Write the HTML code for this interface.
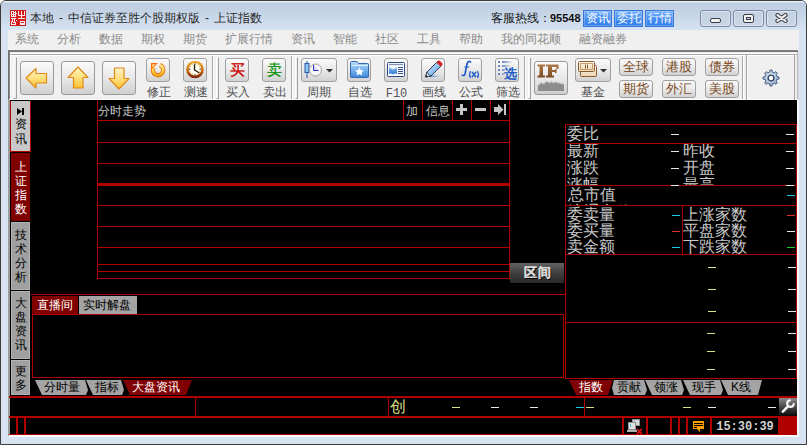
<!DOCTYPE html>
<html><head><meta charset="utf-8">
<style>
*{box-sizing:border-box}
html,body{margin:0;padding:0;width:807px;height:445px;overflow:hidden;background:#fff}
body{font-family:"Liberation Sans",sans-serif;font-size:12px;position:relative}
.a{position:absolute}
#win{left:0;top:0;width:807px;height:445px;border:1px solid #4a4a4a;border-radius:6px 6px 0 0;background:#d7e3f1;border-color:#3c3c3c;overflow:hidden}
#titlebar{left:0;top:0;width:805px;height:30px;background:linear-gradient(#e6eef7 0,#e6eef7 1px,#bccde0 2px,#c8d7e8 50%,#d6e4f2)}
.hy{display:inline-block;width:14px;text-align:center}
.cap{color:#2b2b2b;font-size:12px;line-height:14px;white-space:nowrap}
.bbtn{top:10px;height:17px;width:29px;background:linear-gradient(#74b0fa,#4a92f2 45%,#2f7ceb);border:1px solid #3a78d8;box-shadow:inset 0 0 0 1px rgba(255,255,255,.25);color:#fff;font-size:12px;line-height:15px;text-align:center;white-space:nowrap}
.wbtn{top:10px;height:17px;width:31px;border:1px solid #7a88a6;border-radius:3px;background:linear-gradient(#c2d0e0,#c8d6e6);box-shadow:inset 0 0 0 1px #dde6f0}
#menubar{left:8px;top:30px;width:791px;height:20px;background:#f0f0f0}
.mi{top:2px;color:#8a8a8a;font-size:12px;line-height:14px;white-space:nowrap}
#toolbar{left:7px;top:49px;width:791px;height:51px;background:#f0f0f0;border-top:2px solid #6e6e6e;border-left:2px solid #7a7a7a}
.bigbtn{width:34px;height:34px;border:1px solid #9a9a9a;border-radius:3px;background:linear-gradient(#fafafa,#e6e6e6 55%,#cfcfcf)}
.smbtn{width:24px;height:24px;border:1px solid #a0a0a0;border-radius:3px;background:linear-gradient(#fafafa,#e8e8e8 55%,#d2d2d2)}
.lbl{top:85px;color:#4c4c4c;font-size:12px;line-height:14px;white-space:nowrap;text-align:center}
.sep{top:56px;width:2px;height:43px;border-left:1px solid #a8a8a8;border-right:1px solid #fff}
.grip{top:57px;width:3px;height:42px;border-left:1px solid #fff;border-right:1px solid #a0a0a0;border-top:1px solid #fff;border-bottom:1px solid #a0a0a0}
.tbtn{width:34px;height:18px;border:1px solid #a0a0a0;border-radius:3px;background:linear-gradient(#fafafa,#e8e8e8 55%,#d2d2d2);color:#7a4a22;font-size:13px;line-height:16px;text-align:center;white-space:nowrap}
#main{left:10px;top:100px;width:787px;height:335px;background:#000;overflow:hidden}
.r{background:#b00000}
.vt{width:21px;color:#000;font-size:12px;line-height:14px;text-align:center;border-left:1px solid #b00000;border-right:1px solid #b00000}
.w{color:#c8c8c8}
.dash{height:1px;width:8px}
</style></head><body>
<div id="win" class="a">
  <div id="titlebar" class="a"></div>
</div>
<!-- logo -->
<svg class="a" style="left:10px;top:10px" width="16" height="16"><rect width="16" height="16" fill="#d41c1c"/><g fill="#fff" opacity=".92"><rect x="11" y="1" width="1" height="7"/><rect x="8" y="1" width="1" height="5"/><rect x="14" y="1" width="1" height="5"/><rect x="8" y="5" width="7" height="1"/><rect x="8" y="8" width="7" height="1"/><rect x="10" y="11" width="1" height="4"/><rect x="14" y="11" width="1" height="4"/><rect x="10" y="11" width="5" height="1"/><rect x="10" y="13" width="5" height="2"/><rect x="1" y="1" width="2" height="1"/><rect x="1" y="2" width="1" height="4"/><rect x="3" y="1" width="1" height="3"/><rect x="4" y="2" width="2" height="1"/><rect x="5" y="1" width="1" height="5"/><rect x="2" y="4" width="3" height="1"/><rect x="1" y="6" width="5" height="1"/><rect x="3" y="5" width="1" height="1"/><rect x="6" y="3" width="1" height="1"/><rect x="1" y="8" width="3" height="1"/><rect x="4" y="8" width="2" height="1"/><rect x="2" y="9" width="1" height="2"/><rect x="4" y="9" width="1" height="3"/><rect x="1" y="11" width="2" height="1"/><rect x="1" y="12" width="1" height="3"/><rect x="3" y="12" width="3" height="1"/><rect x="2" y="14" width="3" height="1"/><rect x="5" y="13" width="1" height="2"/><rect x="6" y="10" width="1" height="1"/></g></svg>
<div class="a cap" style="left:30px;top:11px">本地<span class="hy">-</span>中信证券至胜个股期权版<span class="hy">-</span>上证指数</div>
<div class="a cap" style="left:491px;top:11px;color:#111">客服热线：</div><div class="a cap" style="left:550px;top:11px;color:#111;font-size:11px;font-weight:bold;letter-spacing:0px">95548</div>
<div class="a bbtn" style="left:583px">资讯</div>
<div class="a bbtn" style="left:614px">委托</div>
<div class="a bbtn" style="left:645px">行情</div>
<div class="a wbtn" style="left:700px"></div>
<div class="a wbtn" style="left:733px"></div>
<div class="a wbtn" style="left:766px"></div>
<div class="a" style="left:710px;top:18px;width:11px;height:5px;border:1px solid #3a3a48;border-radius:2px;background:#f4f2ee"></div>
<div class="a" style="left:743px;top:14px;width:11px;height:9px;border:1px solid #3a3a48;border-radius:2px;background:#f4f2ee"></div>
<div class="a" style="left:746px;top:17px;width:5px;height:3px;border:1px solid #3a3a48;background:#c8d4e4"></div>
<svg class="a" style="left:775px;top:13px" width="13" height="10"><path d="M2.5 2.2 L10.5 7.8 M10.5 2.2 L2.5 7.8" stroke="#3a3a48" stroke-width="4.2" stroke-linecap="round"/><path d="M2.5 2.2 L10.5 7.8 M10.5 2.2 L2.5 7.8" stroke="#f4f2ee" stroke-width="2.2" stroke-linecap="round"/></svg>

<div id="menubar" class="a">
  <div class="a mi" style="left:7px">系统</div>
  <div class="a mi" style="left:49px">分析</div>
  <div class="a mi" style="left:91px">数据</div>
  <div class="a mi" style="left:133px">期权</div>
  <div class="a mi" style="left:175px">期货</div>
  <div class="a mi" style="left:217px">扩展行情</div>
  <div class="a mi" style="left:283px">资讯</div>
  <div class="a mi" style="left:325px">智能</div>
  <div class="a mi" style="left:367px">社区</div>
  <div class="a mi" style="left:409px">工具</div>
  <div class="a mi" style="left:451px">帮助</div>
  <div class="a mi" style="left:493px">我的同花顺</div>
  <div class="a mi" style="left:571px">融资融券</div>
</div>


<div class="a" style="left:8px;top:50px;width:791px;height:50px;background:#f0f0f0"></div>
<div class="a" style="left:797px;top:52px;width:1px;height:48px;background:#b8b8b8"></div><div class="a" style="left:798px;top:52px;width:1px;height:48px;background:#dcdcdc"></div>
<div class="a" style="left:8px;top:50px;width:790px;height:2px;background:linear-gradient(#8a8a8a,#6a6a6a)"></div>
<div class="a" style="left:8px;top:50px;width:2px;height:50px;background:linear-gradient(90deg,#6a6a6a,#8a8a8a)"></div>
<div class="a" style="left:10px;top:53px;width:787px;height:1px;background:#fff"></div>
<div class="a" style="left:10px;top:54px;width:787px;height:1px;background:#a8a8a8"></div>
<div class="a" style="left:10px;top:55px;width:787px;height:1px;background:#fff"></div>
<div class="a" style="left:10px;top:55px;width:1px;height:45px;background:#fff"></div>
<div class="a" style="left:9px;top:99px;width:789px;height:1px;background:#fafafa"></div>
<!-- grips & seps -->
<div class="a grip" style="left:13px;width:4px"></div>
<div class="a sep" style="left:212px"></div><div class="a grip" style="left:216px"></div>
<div class="a sep" style="left:291px"></div><div class="a grip" style="left:295px"></div>
<div class="a sep" style="left:524px"></div><div class="a grip" style="left:528px"></div>
<div class="a sep" style="left:742px"></div>
<div class="a" style="left:746px;top:55px;width:49px;height:45px;border-left:1px solid #a0a0a0;border-right:1px solid #a0a0a0;box-shadow:inset 1px 0 0 #fff"></div>

<!-- big arrow buttons -->
<div class="a bigbtn" style="left:20px;top:61px"></div>
<div class="a bigbtn" style="left:61px;top:61px"></div>
<div class="a bigbtn" style="left:102px;top:61px"></div>
<svg class="a" style="left:20px;top:61px" width="34" height="34">
<defs><linearGradient id="ag" x1="0" y1="0" x2="0" y2="1"><stop offset="0" stop-color="#fff4c8"/><stop offset="0.5" stop-color="#ffe080"/><stop offset="1" stop-color="#ffc030"/></linearGradient></defs>
<path d="M6 17 L16 7.5 V12.5 H26.5 V22 H16 V27 Z" fill="url(#ag)" stroke="#e08a18" stroke-width="1.2" stroke-linejoin="round"/>
</svg>
<svg class="a" style="left:61px;top:61px" width="34" height="34">
<path d="M17 6 L27 16.5 H22 V27 H12.5 V16.5 H7 Z" fill="url(#ag)" stroke="#e08a18" stroke-width="1.2" stroke-linejoin="round"/>
</svg>
<svg class="a" style="left:102px;top:61px" width="34" height="34">
<path d="M17 28 L27 17.5 H22 V7 H12.5 V17.5 H7 Z" fill="url(#ag)" stroke="#e08a18" stroke-width="1.2" stroke-linejoin="round"/>
</svg>

<!-- small buttons -->
<div class="a smbtn" style="left:146px;top:58px"></div>
<div class="a smbtn" style="left:183px;top:58px"></div>
<div class="a smbtn" style="left:225px;top:58px"></div>
<div class="a smbtn" style="left:262px;top:58px"></div>
<div class="a smbtn" style="left:301px;top:58px;width:36px"></div>
<div class="a smbtn" style="left:347px;top:58px"></div>
<div class="a smbtn" style="left:384px;top:58px"></div>
<div class="a smbtn" style="left:421px;top:58px"></div>
<div class="a smbtn" style="left:458px;top:58px"></div>
<div class="a smbtn" style="left:495px;top:58px"></div>
<div class="a bigbtn" style="left:534px;top:61px"></div>
<div class="a smbtn" style="left:575px;top:58px;width:36px"></div>

<!-- icons -->
<svg class="a" style="left:146px;top:58px" width="24" height="24">
<defs><linearGradient id="og" x1="0" y1="0" x2="0" y2="1"><stop offset="0" stop-color="#fff0a0"/><stop offset=".6" stop-color="#ffd040"/><stop offset="1" stop-color="#f0a818"/></linearGradient></defs>
<path d="M13.8 7.1 A5.2 5.2 0 1 1 7.5 9.4" fill="none" stroke="#e87818" stroke-width="4.4"/>
<path d="M13.8 7.1 A5.2 5.2 0 1 1 7.5 9.4" fill="none" stroke="url(#og)" stroke-width="2.6"/>
<path d="M5 5 H12 L5 12 Z" fill="#ff6a10"/>
<path d="M6.3 6.3 H9.5 L6.3 9.5 Z" fill="#ffe890"/>
</svg>
<svg class="a" style="left:183px;top:58px" width="24" height="24">
<defs><linearGradient id="cg" x1="0" y1="0" x2="0" y2="1"><stop offset="0" stop-color="#f0b030"/><stop offset=".55" stop-color="#c87010"/><stop offset="1" stop-color="#7a1a06"/></linearGradient></defs>
<circle cx="12" cy="11.5" r="8.8" fill="url(#cg)"/>
<circle cx="12" cy="11.3" r="6.2" fill="#fffcf0"/>
<path d="M11.5 6.5 V12 L16.5 15" stroke="#201008" stroke-width="1.3" fill="none"/>
<g fill="#302010"><circle cx="12" cy="6" r=".7"/><circle cx="17.2" cy="11.3" r=".7"/><circle cx="12" cy="16.6" r=".7"/><circle cx="6.6" cy="11.3" r=".7"/></g>
<g fill="#e0a040"><circle cx="14.7" cy="6.8" r=".5"/><circle cx="9.3" cy="6.8" r=".5"/><circle cx="16.5" cy="8.7" r=".5"/><circle cx="7.5" cy="8.7" r=".5"/><circle cx="16.5" cy="14" r=".5"/><circle cx="7.5" cy="14" r=".5"/><circle cx="14.7" cy="15.9" r=".5"/><circle cx="9.3" cy="15.9" r=".5"/></g>
</svg>
<div class="a" style="left:225px;top:60px;width:24px;text-align:center;font-size:15px;line-height:20px;color:#cc0000;font-weight:normal;-webkit-text-stroke:.3px #cc0000">买</div>
<div class="a" style="left:262px;top:60px;width:24px;text-align:center;font-size:15px;line-height:20px;color:#0a900a;font-weight:normal;-webkit-text-stroke:.3px #0a900a">卖</div>
<svg class="a" style="left:301px;top:58px" width="36" height="24">
<path d="M6 3 V20" stroke="#2a5aa0" stroke-width="1"/>
<rect x="4" y="5.5" width="4" height="9" fill="#8cc4f4" stroke="#2a5aa0" stroke-width="1"/>
<circle cx="14.5" cy="12" r="6" fill="#f8f8f8" stroke="#a0a0a0" stroke-width="1"/>
<path d="M12.5 7 V12.5 H17.5 Z" fill="#d0d8f8"/>
<path d="M12.5 7 V12.5 H17.5" stroke="#3030b0" stroke-width="1" fill="none"/>
<path d="M25 11 H32 L28.5 14.5 Z" fill="#303030"/>
</svg>
<svg class="a" style="left:347px;top:58px" width="24" height="24">
<defs><linearGradient id="fg" x1="0" y1="0" x2="0" y2="1"><stop offset="0" stop-color="#b8dcfa"/><stop offset=".5" stop-color="#7ab4ee"/><stop offset="1" stop-color="#3c84dc"/></linearGradient></defs>
<path d="M3.5 4.5 Q3.5 3.5 4.5 3.5 H10 L11.5 5.5 H20.5 Q21.5 5.5 21.5 6.5 V18.5 Q21.5 19.5 20.5 19.5 H4.5 Q3.5 19.5 3.5 18.5 Z" fill="url(#fg)" stroke="#3468b0" stroke-width="1"/>
<path d="M4 7.5 H21" stroke="#e0f0ff" stroke-width="1"/>
<path d="M12.5 9.5 L13.9 12.3 L17 12.6 L14.7 14.6 L15.4 17.6 L12.5 16 L9.6 17.6 L10.3 14.6 L8 12.6 L11.1 12.3 Z" fill="#fff"/>
</svg>
<svg class="a" style="left:384px;top:58px" width="24" height="24">
<defs><linearGradient id="wv" x1="0" y1="0" x2="0" y2="1"><stop offset="0" stop-color="#90c0f0"/><stop offset="1" stop-color="#2a78d8"/></linearGradient></defs>
<rect x="3.5" y="4.5" width="17" height="14" rx="1" fill="#fafcff" stroke="#2a4a80" stroke-width="1"/>
<path d="M5 6.5 H19" stroke="#8090b0" stroke-width="1.2"/>
<path d="M5 9 L9 11.5 L13 9 V16 Q11 15 9 16.5 Q7 15 5 16 Z" fill="url(#wv)"/>
<path d="M14 9.5 H19 M14 11.5 H19 M14 13.5 H19 M14 15.5 H19" stroke="#34508a" stroke-width="1"/>
</svg>
<svg class="a" style="left:421px;top:58px" width="24" height="24">
<defs><linearGradient id="sh" x1="0" y1="0" x2="1" y2="0"><stop offset="0" stop-color="#2a80e0"/><stop offset="1" stop-color="#2a80e0" stop-opacity="0"/></linearGradient>
<linearGradient id="pb" x1="0" y1="0" x2="1" y2="1"><stop offset="0" stop-color="#d8ecff"/><stop offset=".5" stop-color="#98c4f0"/><stop offset="1" stop-color="#5a90d0"/></linearGradient></defs>
<rect x="8" y="17.5" width="11" height="1.6" fill="url(#sh)"/>
<path d="M4.5 19 L6 14 L16.5 3.5 L20.5 7.5 L10 18 Z" fill="url(#pb)" stroke="#2a3a58" stroke-width="1" stroke-linejoin="round"/>
<path d="M15.5 4.5 L17.3 2.7 Q18 2 18.7 2.7 L21.3 5.3 Q22 6 21.3 6.7 L19.5 8.5 Z" fill="#d82020"/>
<path d="M6 14 Q7 17 10 18 L4.5 19 Z" fill="#f0f0f0" stroke="#2a3a58" stroke-width=".8"/>
<path d="M4.5 19 L5.2 16.8 L6.8 18.3 Z" fill="#101010"/>
</svg>
<svg class="a" style="left:458px;top:58px" width="24" height="24">
<g fill="none" stroke="#1e5cc8" stroke-linecap="round">
<path d="M12.5 4 Q11.5 2.8 10.3 3.6 Q9.3 4.4 8.9 6.5 L7 16 Q6.4 18.2 4.3 17.2" stroke-width="1.7"/>
<path d="M6.8 9 H10.8" stroke-width="1.2"/>
<path d="M12.3 13.5 Q10.8 16.5 12.3 19.5 M19.7 13.5 Q21.2 16.5 19.7 19.5" stroke-width="1.3"/>
<path d="M14.2 14.2 L17.8 18.8 M17.8 14.2 L14.2 18.8" stroke-width="1.4"/>
</g></svg>
<svg class="a" style="left:495px;top:58px" width="24" height="24">
<defs><linearGradient id="fb" x1="0" y1="0" x2="1" y2="0"><stop offset="0" stop-color="#6a8cc0"/><stop offset="1" stop-color="#6a8cc0" stop-opacity="0"/></linearGradient></defs>
<g fill="#6a88b8"><rect x="3" y="3" width="2" height="2"/><rect x="3" y="7" width="2" height="2"/><rect x="3" y="11" width="2" height="2"/><rect x="3" y="15" width="2" height="2"/></g>
<g fill="url(#fb)"><rect x="7" y="3" width="11" height="2"/><rect x="7" y="7" width="9" height="2"/><rect x="7" y="11" width="5" height="2"/><rect x="7" y="15" width="3" height="2"/></g>
<text x="9" y="20" font-size="13" font-weight="bold" fill="#1e5cc8" font-family="Liberation Sans, sans-serif">选</text>
</svg>
<svg class="a" style="left:534px;top:61px" width="34" height="34">
<defs><linearGradient id="ifg" x1="0" y1="0" x2="0" y2="1"><stop offset="0" stop-color="#b07848"/><stop offset="1" stop-color="#7a4a20"/></linearGradient></defs>
<g fill="url(#ifg)">
<path d="M3.5 3.5 H11 V5.5 H9 V14.5 H11 V16.5 H3.5 V14.5 H5.5 V5.5 H3.5 Z"/>
<path d="M12 3.5 H24.5 V8 H22.5 V6 H18 V9 H21 V8 H22.5 V12 H21 V11 H18 V14.5 H20 V16.5 H12 V14.5 H14 V5.5 H12 Z"/>
</g>
<path d="M4 30 V25 L5 23 L6 24 L7 21 L8 23 L9 22 L10 24 L11 21 L12 22 L13 20 L14 22 L15 21 L16 23 L17 20 L18 22 L19 21 L20 23 L21 20 L22 22 L23 21 L24 23 L25 21 L26 23 L27 22 L28 24 L29 22 L30 24 V30 Z" fill="#8c8c8c"/>
</svg>
<svg class="a" style="left:575px;top:58px" width="36" height="24">
<defs><linearGradient id="bg1" x1="0" y1="0" x2="0" y2="1"><stop offset="0" stop-color="#fffaf0"/><stop offset="1" stop-color="#e8d4b0"/></linearGradient></defs>
<rect x="5.5" y="7.5" width="16" height="11" rx="1" fill="url(#bg1)" stroke="#8a5a30" stroke-width="1"/>
<rect x="3.5" y="3.5" width="16" height="10" rx="1" fill="url(#bg1)" stroke="#8a5a30" stroke-width="1"/>
<rect x="5.5" y="5.5" width="12" height="6" fill="none" stroke="#c8a070" stroke-width="1"/>
<path d="M10.5 6.5 V10.5 M12.5 6.5 V10.5" stroke="#8a6030" stroke-width="1"/>
<path d="M25 11 H32 L28.5 14.5 Z" fill="#303030"/>
</svg>
<!-- gear -->
<svg class="a" style="left:762px;top:69px" width="18" height="18">
<defs><radialGradient id="gg" cx=".45" cy=".4" r=".65"><stop offset="0" stop-color="#e4ecf4"/><stop offset=".7" stop-color="#a8bcd4"/><stop offset="1" stop-color="#6a84a8"/></radialGradient></defs>
<path d="M7.60 3.17 L7.94 1.07 L10.06 1.07 L10.40 3.17 L12.13 3.88 L13.85 2.64 L15.36 4.15 L14.12 5.87 L14.83 7.60 L16.93 7.94 L16.93 10.06 L14.83 10.40 L14.12 12.13 L15.36 13.85 L13.85 15.36 L12.13 14.12 L10.40 14.83 L10.06 16.93 L7.94 16.93 L7.60 14.83 L5.87 14.12 L4.15 15.36 L2.64 13.85 L3.88 12.13 L3.17 10.40 L1.07 10.06 L1.07 7.94 L3.17 7.60 L3.88 5.87 L2.64 4.15 L4.15 2.64 L5.87 3.88 Z" fill="url(#gg)" stroke="#3a5478" stroke-width=".9" stroke-linejoin="round"/>
<circle cx="9" cy="9" r="2.9" fill="#fff" stroke="#2e4468" stroke-width="1.4"/>
</svg>

<!-- labels -->
<div class="a lbl" style="left:146px;width:25px">修正</div>
<div class="a lbl" style="left:183px;width:25px">测速</div>
<div class="a lbl" style="left:225px;width:25px">买入</div>
<div class="a lbl" style="left:262px;width:25px">卖出</div>
<div class="a lbl" style="left:301px;width:36px">周期</div>
<div class="a lbl" style="left:347px;width:25px">自选</div>
<div class="a lbl" style="left:384px;top:87px;width:25px;font-family:'Liberation Mono',monospace;color:#555">F10</div>
<div class="a lbl" style="left:421px;width:25px">画线</div>
<div class="a lbl" style="left:458px;width:25px">公式</div>
<div class="a lbl" style="left:495px;width:25px">筛选</div>
<div class="a lbl" style="left:575px;width:36px">基金</div>

<div class="a tbtn" style="left:619px;top:58px">全球</div>
<div class="a tbtn" style="left:619px;top:80px">期货</div>
<div class="a tbtn" style="left:662px;top:58px">港股</div>
<div class="a tbtn" style="left:662px;top:80px">外汇</div>
<div class="a tbtn" style="left:705px;top:58px">债券</div>
<div class="a tbtn" style="left:705px;top:80px">美股</div>



<div id="main" class="a"></div>
<!-- frame shadow line left of black -->
<div class="a" style="left:8px;top:100px;width:2px;height:336px;background:#9c9c9c"></div>
<!-- white bottom edge -->
<div class="a" style="left:9px;top:435px;width:790px;height:2px;background:#fafafa"></div>
<div class="a" style="left:797px;top:100px;width:2px;height:337px;background:#fafafa"></div>

<!-- left vertical tabs -->
<div class="a" style="left:10px;top:101px;width:21px;height:51px;background:#c8c8c8;border:1px solid #b00000;border-top:0"></div>
<svg class="a" style="left:17px;top:108px" width="8" height="7"><path d="M0 0 L5 3.5 L0 7 Z M5 0 H7 V7 H5 Z" fill="#000"/></svg>
<div class="a vt" style="left:10px;top:117px;border:0;line-height:15px">资<br>讯</div>
<div class="a" style="left:11px;top:153px;width:19px;height:68px;background:#800000"></div>
<div class="a vt" style="left:10px;top:160px;border:0;color:#fff">上<br>证<br>指<br>数</div>
<div class="a" style="left:11px;top:222px;width:19px;height:68px;background:#a0a0a0;box-shadow:inset 0 0 0 1px #b4b4b4"></div>
<div class="a vt" style="left:10px;top:228px;border:0">技<br>术<br>分<br>析</div>
<div class="a" style="left:11px;top:291px;width:19px;height:68px;background:#a0a0a0;box-shadow:inset 0 0 0 1px #b4b4b4"></div>
<div class="a vt" style="left:10px;top:296px;border:0">大<br>盘<br>资<br>讯</div>
<div class="a" style="left:11px;top:360px;width:19px;height:35px;background:#a0a0a0;box-shadow:inset 0 0 0 1px #b4b4b4"></div>
<div class="a vt" style="left:10px;top:364px;border:0">更<br>多</div>

<!-- chart area -->
<div class="a w" style="left:98px;top:104px;font-size:12px;line-height:14px;color:#c8c8c8">分时走势</div>
<div class="a r" style="left:97px;top:100px;width:1px;height:179px"></div>
<div class="a r" style="left:509px;top:100px;width:1px;height:179px"></div>
<div class="a r" style="left:97px;top:120px;width:413px;height:1px"></div>
<div class="a r" style="left:97px;top:142px;width:413px;height:1px"></div>
<div class="a r" style="left:97px;top:163px;width:413px;height:1px"></div>
<div class="a r" style="left:97px;top:183px;width:413px;height:3px"></div>
<div class="a r" style="left:97px;top:205px;width:413px;height:1px"></div>
<div class="a r" style="left:97px;top:226px;width:413px;height:1px"></div>
<div class="a r" style="left:97px;top:247px;width:413px;height:1px"></div>
<div class="a r" style="left:97px;top:264px;width:413px;height:1px"></div>
<div class="a r" style="left:97px;top:271px;width:413px;height:1px"></div>
<div class="a r" style="left:97px;top:278px;width:413px;height:1px"></div>
<!-- top buttons -->
<div class="a r" style="left:403px;top:100px;width:1px;height:20px"></div>
<div class="a r" style="left:422px;top:100px;width:1px;height:20px"></div>
<div class="a r" style="left:452px;top:100px;width:1px;height:20px"></div>
<div class="a r" style="left:471px;top:100px;width:1px;height:20px"></div>
<div class="a r" style="left:490px;top:100px;width:1px;height:20px"></div>
<div class="a w" style="left:406px;top:104px;font-size:12px;line-height:14px">加</div>
<div class="a w" style="left:426px;top:104px;font-size:12px;line-height:14px">信息</div>
<svg class="a" style="left:456px;top:104px" width="11" height="11"><path d="M4 0 H7 V4 H11 V7 H7 V11 H4 V7 H0 V4 H4 Z" fill="#c8c8c8"/></svg>
<svg class="a" style="left:475px;top:108px" width="11" height="3"><rect width="11" height="3" fill="#c8c8c8"/></svg>
<svg class="a" style="left:494px;top:104px" width="12" height="11"><path d="M0 3 H4 V0 L9.5 5.5 L4 11 V8 H0 Z M10 0 H12 V11 H10 Z" fill="#c8c8c8"/></svg>
<!-- 区间 button -->
<div class="a" style="left:510px;top:263px;width:54px;height:20px;background:linear-gradient(#626262,#3a3a3a 60%,#2a2a2a);color:#d8d8d8;font-size:13px;line-height:20px;font-weight:bold;-webkit-text-stroke:.3px #d8d8d8;text-shadow:1px 1px 0 #000"><span style="position:absolute;left:14px">区</span><span style="position:absolute;left:28px">间</span></div>

<!-- live panel -->
<div class="a r" style="left:31px;top:294px;width:535px;height:1px"></div>
<div class="a" style="left:32px;top:296px;width:46px;height:18px;background:#800000;color:#fff;font-size:12px;line-height:18px;padding-left:5px;white-space:nowrap">直播间</div>
<div class="a" style="left:79px;top:296px;width:58px;height:18px;background:#a4a4a4;color:#000;font-size:12px;line-height:18px;padding-left:4px;white-space:nowrap">实时解盘</div>
<div class="a" style="left:32px;top:314px;width:532px;height:64px;border:1px solid #b00000"></div>
<!-- bottom tabs left -->
<svg class="a" style="left:30px;top:380px" width="170" height="15">
<polygon points="5,0 55,0 58,10 56,15 12,15" fill="#a4a4a4"/>
<polygon points="56,0 91,0 94,10 92,15 63,15" fill="#a4a4a4"/>
<polygon points="93,0 162,0 156,15 100,15" fill="#800000"/>
</svg>
<div class="a" style="left:44px;top:380px;font-size:12px;line-height:15px;color:#000;white-space:nowrap">分时量</div>
<div class="a" style="left:95px;top:380px;font-size:12px;line-height:15px;color:#000;white-space:nowrap">指标</div>
<div class="a" style="left:132px;top:380px;font-size:12px;line-height:15px;color:#fff;white-space:nowrap">大盘资讯</div>

<!-- right panel -->
<div class="a r" style="left:565px;top:124px;width:232px;height:1px"></div>
<div class="a r" style="left:565px;top:143px;width:232px;height:1px"></div>
<div class="a r" style="left:565px;top:185px;width:232px;height:1px"></div>
<div class="a r" style="left:565px;top:205px;width:232px;height:1px"></div>
<div class="a r" style="left:565px;top:254px;width:232px;height:1px"></div>
<div class="a r" style="left:565px;top:322px;width:232px;height:1px"></div>
<div class="a r" style="left:565px;top:378px;width:232px;height:1px"></div>
<div class="a r" style="left:565px;top:124px;width:1px;height:255px"></div>
<div class="a r" style="left:796px;top:124px;width:1px;height:255px"></div>
<div class="a r" style="left:682px;top:205px;width:1px;height:49px"></div>

<div class="a" style="left:566px;top:125px;width:230px;height:18px;overflow:hidden"><div class="a w" style="left:1px;top:0px;font-size:16px;line-height:17px">委比</div></div>
<div class="a" style="left:566px;top:144px;width:230px;height:41px;overflow:hidden">
 <div class="a w" style="left:1px;top:-2px;font-size:16px;line-height:17px">最新<br>涨跌<br>涨幅</div>
 <div class="a w" style="left:117px;top:-2px;font-size:16px;line-height:17px">昨收<br>开盘<br>最高</div>
</div>
<div class="a" style="left:566px;top:186px;width:230px;height:19px;overflow:hidden">
 <div class="a w" style="left:2px;top:0px;font-size:16px;line-height:17px">总市值<br>流通市值</div>
</div>
<div class="a" style="left:566px;top:206px;width:116px;height:48px;overflow:hidden">
 <div class="a w" style="left:1px;top:1px;font-size:16px;line-height:16px">委卖量<br>委买量<br>卖金额</div>
</div>
<div class="a" style="left:683px;top:206px;width:113px;height:48px;overflow:hidden">
 <div class="a w" style="left:0px;top:1px;font-size:16px;line-height:16px">上涨家数<br>平盘家数<br>下跌家数</div>
</div>
<div class="a" style="left:671px;top:134px;width:8px;height:1px;background:#e8e8e8"></div>
<div class="a" style="left:786px;top:134px;width:8px;height:1px;background:#e8e8e8"></div>
<div class="a" style="left:671px;top:151px;width:8px;height:1px;background:#e8e8e8"></div>
<div class="a" style="left:786px;top:151px;width:8px;height:1px;background:#e8e8e8"></div>
<div class="a" style="left:671px;top:168px;width:8px;height:1px;background:#e8e8e8"></div>
<div class="a" style="left:786px;top:168px;width:8px;height:1px;background:#e8e8e8"></div>
<div class="a" style="left:671px;top:185px;width:8px;height:1px;background:#e8e8e8"></div>
<div class="a" style="left:786px;top:185px;width:8px;height:1px;background:#e8e8e8"></div>
<div class="a" style="left:787px;top:195px;width:8px;height:1px;background:#20c8e8"></div>
<div class="a" style="left:672px;top:215px;width:8px;height:1px;background:#20c8e8"></div>
<div class="a" style="left:672px;top:231px;width:8px;height:1px;background:#e03030"></div>
<div class="a" style="left:672px;top:247px;width:8px;height:1px;background:#20c8e8"></div>
<div class="a" style="left:787px;top:215px;width:8px;height:1px;background:#e03030"></div>
<div class="a" style="left:787px;top:231px;width:8px;height:1px;background:#e8e8e8"></div>
<div class="a" style="left:787px;top:247px;width:8px;height:1px;background:#20d020"></div>
<div class="a" style="left:708px;top:267px;width:8px;height:1px;background:#e0e080"></div>
<div class="a" style="left:788px;top:267px;width:8px;height:1px;background:#e8e8e8"></div>
<div class="a" style="left:708px;top:289px;width:8px;height:1px;background:#e0e080"></div>
<div class="a" style="left:788px;top:289px;width:8px;height:1px;background:#e8e8e8"></div>
<div class="a" style="left:708px;top:311px;width:8px;height:1px;background:#e0e080"></div>
<div class="a" style="left:788px;top:311px;width:8px;height:1px;background:#e8e8e8"></div>
<div class="a" style="left:707px;top:333px;width:8px;height:1px;background:#e0e080"></div>
<div class="a" style="left:788px;top:333px;width:8px;height:1px;background:#e8e8e8"></div>
<div class="a" style="left:707px;top:351px;width:8px;height:1px;background:#e0e080"></div>
<div class="a" style="left:788px;top:351px;width:8px;height:1px;background:#e8e8e8"></div>
<div class="a" style="left:707px;top:369px;width:8px;height:1px;background:#e0e080"></div>
<div class="a" style="left:788px;top:369px;width:8px;height:1px;background:#e8e8e8"></div>
<div class="a" style="left:452px;top:407px;width:8px;height:1px;background:#e0e080"></div>
<div class="a" style="left:491px;top:407px;width:8px;height:1px;background:#e8e8e8"></div>
<div class="a" style="left:530px;top:407px;width:8px;height:1px;background:#e8e8e8"></div>
<div class="a" style="left:576px;top:407px;width:8px;height:1px;background:#20c8e8"></div>
<div class="a" style="left:586px;top:407px;width:8px;height:1px;background:#e0e080"></div>
<div class="a" style="left:683px;top:407px;width:8px;height:1px;background:#e0e080"></div>
<div class="a" style="left:708px;top:407px;width:8px;height:1px;background:#e8e8e8"></div>
<div class="a" style="left:768px;top:407px;width:8px;height:1px;background:#e8e8e8"></div>
<!-- right bottom tabs -->
<svg class="a" style="left:565px;top:380px" width="200" height="15">
<polygon points="4,0 48,0 43,15 11,15" fill="#800000"/>
<polygon points="49,0 79,0 82,10 80,15 49,15 47,8" fill="#a4a4a4"/>
<polygon points="80,0 116,0 119,10 117,15 87,15" fill="#a4a4a4"/>
<polygon points="118,0 155,0 158,10 156,15 125,15" fill="#a4a4a4"/>
<polygon points="156,0 197,0 193,15 163,15" fill="#a4a4a4"/>
</svg>
<div class="a" style="left:579px;top:380px;font-size:12px;line-height:15px;color:#fff;white-space:nowrap">指数</div>
<div class="a" style="left:617px;top:380px;font-size:12px;line-height:15px;color:#000;white-space:nowrap">贡献</div>
<div class="a" style="left:654px;top:380px;font-size:12px;line-height:15px;color:#000;white-space:nowrap">领涨</div>
<div class="a" style="left:692px;top:380px;font-size:12px;line-height:15px;color:#000;white-space:nowrap">现手</div>
<div class="a" style="left:731px;top:380px;font-size:12px;line-height:15px;color:#000;white-space:nowrap">K线</div>

<!-- status rows -->
<div class="a r" style="left:9px;top:396px;width:788px;height:2px"></div>
<div class="a r" style="left:9px;top:416px;width:788px;height:2px"></div>
<div class="a r" style="left:9px;top:434px;width:788px;height:1px"></div>
<div class="a r" style="left:195px;top:398px;width:1px;height:18px"></div>
<div class="a r" style="left:388px;top:398px;width:1px;height:18px"></div>
<div class="a r" style="left:584px;top:398px;width:1px;height:18px"></div>
<div class="a" style="left:390px;top:398px;font-size:16px;line-height:18px;color:#dcdc88">创</div>
<div class="a" style="left:779px;top:398px;width:18px;height:18px;background:linear-gradient(#8a8a8a,#3a3a3a 60%,#0a0a0a)"></div>
<svg class="a" style="left:779px;top:398px" width="18" height="18"><path d="M3.8 13.6 L9.2 8.2" stroke="#f4f4f4" stroke-width="2.6" stroke-linecap="round"/><path d="M10.9 2.3 A3.3 3.3 0 1 0 14.75 6.1" stroke="#f4f4f4" stroke-width="2.2" fill="none" stroke-linecap="round"/></svg>

<div class="a r" style="left:16px;top:418px;width:2px;height:16px"></div>
<div class="a r" style="left:24px;top:418px;width:2px;height:16px"></div>
<div class="a r" style="left:622px;top:418px;width:2px;height:16px"></div>
<div class="a r" style="left:646px;top:418px;width:2px;height:16px"></div>
<div class="a r" style="left:670px;top:418px;width:2px;height:16px"></div>
<div class="a r" style="left:678px;top:418px;width:2px;height:16px"></div>
<div class="a r" style="left:686px;top:418px;width:2px;height:16px"></div>
<div class="a r" style="left:710px;top:418px;width:2px;height:16px"></div>
<div class="a" style="left:712px;top:418px;width:66px;height:16px;background:#000;color:#d0d0d0;font-family:'Liberation Mono',monospace;font-weight:bold;font-size:12px;line-height:18px;text-align:center;white-space:nowrap">15:30:39</div>
<div class="a" style="left:778px;top:418px;width:19px;height:16px;background:#b00000"></div>
<!-- network icon -->
<svg class="a" style="left:626px;top:418px" width="18" height="17">
<rect x="6.5" y="1.5" width="7" height="6" fill="#d8d8d8" stroke="#909090"/>
<rect x="8" y="3" width="1" height="3" fill="#40c0f0"/>
<rect x="2.5" y="4.5" width="7" height="7" fill="#e0e0e0" stroke="#909090"/>
<rect x="4" y="6" width="1" height="3" fill="#40c0f0"/>
<rect x="1" y="12" width="10" height="2" fill="#b0b0b0"/>
<path d="M11 11 L16 16 M16 11 L11 16" stroke="#ff1010" stroke-width="1.5"/>
</svg>
<!-- message icon -->
<svg class="a" style="left:692px;top:421px" width="13" height="12">
<path d="M1 0 H12 V8 H8 L8 11 L5 8 H1 Z" fill="#ffa000"/>
<path d="M2 2.5 H11 M2 4.5 H11 M2 6.5 H5" stroke="#000" stroke-width="1"/>
</svg>

</body></html>
